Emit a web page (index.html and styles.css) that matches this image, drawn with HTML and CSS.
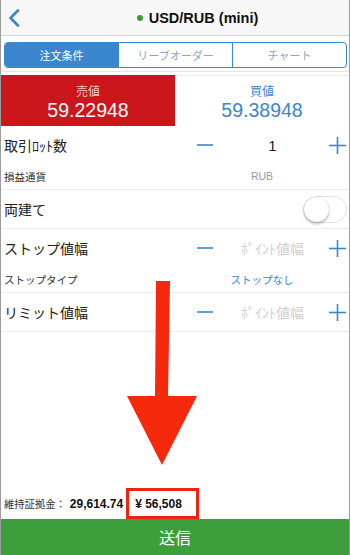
FILE: index.html
```html
<!DOCTYPE html>
<html lang="ja">
<head>
<meta charset="utf-8">
<link rel="stylesheet" href="styles.css">
</head>
<body>
<div class="app">
  <header class="nav">
    <svg class="back" width="12" height="18" viewBox="0 0 12 18"><path d="M10 1.5 L2.5 9 L10 16.5" fill="none" stroke="#3a86cf" stroke-width="2.6" stroke-linecap="round" stroke-linejoin="round"/></svg>
    <div class="title"><span class="dot"></span>USD/RUB (mini)</div>
  </header>
  <div class="segwrap">
    <div class="seg">
      <div class="tab active">注文条件</div>
      <div class="tab">リーブオーダー</div>
      <div class="tab">チャート</div>
    </div>
  </div>
  <div class="prices">
    <div class="price sell"><div class="plabel">売値</div><div class="pval">59.22948</div></div>
    <div class="price buy"><div class="plabel">買値</div><div class="pval">59.38948</div></div>
  </div>
  <div class="group">
    <div class="row main">
      <div class="label">取引ﾛｯﾄ数</div>
      <div class="stepper">
        <svg class="minus" width="16" height="2" viewBox="0 0 16 2"><line x1="0" y1="1" x2="16" y2="1" stroke="#3a86cf" stroke-width="1.6"/></svg>
        <div class="val">1</div>
        <svg class="plus" width="17" height="17" viewBox="0 0 17 17"><line x1="0" y1="8.5" x2="17" y2="8.5" stroke="#3a86cf" stroke-width="1.6"/><line x1="8.5" y1="0" x2="8.5" y2="17" stroke="#3a86cf" stroke-width="1.6"/></svg>
      </div>
    </div>
    <div class="row sub">
      <div class="slabel">損益通貨</div>
      <div class="sval gray">RUB</div>
    </div>
  </div>
  <div class="group">
    <div class="row single">
      <div class="label">両建て</div>
      <div class="toggle"><div class="knob"></div></div>
    </div>
  </div>
  <div class="group">
    <div class="row main">
      <div class="label">ストップ値幅</div>
      <div class="stepper">
        <svg class="minus" width="16" height="2" viewBox="0 0 16 2"><line x1="0" y1="1" x2="16" y2="1" stroke="#3a86cf" stroke-width="1.6"/></svg>
        <div class="val ph">ﾎﾟｲﾝﾄ値幅</div>
        <svg class="plus" width="17" height="17" viewBox="0 0 17 17"><line x1="0" y1="8.5" x2="17" y2="8.5" stroke="#3a86cf" stroke-width="1.6"/><line x1="8.5" y1="0" x2="8.5" y2="17" stroke="#3a86cf" stroke-width="1.6"/></svg>
      </div>
    </div>
    <div class="row sub">
      <div class="slabel">ストップタイプ</div>
      <div class="sval blue">ストップなし</div>
    </div>
  </div>
  <div class="group">
    <div class="row single">
      <div class="label">リミット値幅</div>
      <div class="stepper">
        <svg class="minus" width="16" height="2" viewBox="0 0 16 2"><line x1="0" y1="1" x2="16" y2="1" stroke="#3a86cf" stroke-width="1.6"/></svg>
        <div class="val ph">ﾎﾟｲﾝﾄ値幅</div>
        <svg class="plus" width="17" height="17" viewBox="0 0 17 17"><line x1="0" y1="8.5" x2="17" y2="8.5" stroke="#3a86cf" stroke-width="1.6"/><line x1="8.5" y1="0" x2="8.5" y2="17" stroke="#3a86cf" stroke-width="1.6"/></svg>
      </div>
    </div>
  </div>
  <div class="spacer"></div>
  <div class="margin">
    <span class="mlabel">維持証拠金：</span>
    <span class="mnum">29,614.74</span>
    <span class="yen">¥ 56,508</span>
  </div>
  <div class="submit">送信</div>
  <svg class="arrow" width="350" height="555" viewBox="0 0 350 555">
    <polygon points="156,281 170,281 168,397 155,397" fill="#f7290c"/>
    <polygon points="127,396 197,396 162,465" fill="#f7290c"/>
  </svg>
</div>
</body>
</html>
```
FILE: styles.css
```css
* { box-sizing: border-box; }
html, body { margin: 0; padding: 0; background: #fff; }
body { font-family: "Liberation Sans", "Noto Sans CJK JP", sans-serif; color: #222; }
.app {
  position: relative;
  width: 350px;
  height: 555px;
  border-left: 1px solid #9c9c9c;
  border-right: 1px solid #9c9c9c;
  display: flex;
  flex-direction: column;
  overflow: hidden;
}
.nav {
  height: 36px;
  background: #f7f7f7;
  border-bottom: 1px solid #d4d4d4;
  display: flex;
  align-items: center;
  padding-left: 7px;
  flex-shrink: 0;
}
.back { display: block; }
.title {
  flex: 1;
  text-align: center;
  font-weight: bold;
  font-size: 14.5px;
  padding-left: 26px;
  color: #111;
  display: flex;
  justify-content: center;
  align-items: center;
}
.dot {
  width: 6px; height: 6px; border-radius: 50%;
  background: #3c9a3c;
  margin-right: 6px;
}
.segwrap {
  padding: 6px 2px 3px 3px;
  border-bottom: 1px solid #e4e4e4;
  flex-shrink: 0;
}
.seg {
  display: flex;
  height: 26px;
  border: 1px solid #3a86cf;
  border-radius: 4px;
  overflow: hidden;
}
.tab {
  flex: 1;
  display: flex;
  align-items: center;
  justify-content: center;
  font-family: "Noto Sans CJK JP", sans-serif;
  font-size: 11px;
  color: #8aa6c9;
  border-left: 1px solid #3a86cf;
}
.tab:first-child { border-left: none; }
.tab.active { background: #3a86cf; color: #fff; }
.prices {
  display: flex;
  height: 51px;
  margin-top: 3px;
  flex-shrink: 0;
}
.price {
  flex: 1;
  display: flex;
  flex-direction: column;
  align-items: center;
  justify-content: center;
}
.sell { background: #cb171c; color: #fff; flex: 0 0 174px; }
.buy { color: #3a86cf; border-top: 1px solid #ececec; }
.plabel { font-family: "Noto Sans CJK JP", sans-serif; font-size: 12px; line-height: 16px; margin-top: 2px; }
.sell .plabel { color: #f3c9c9; }
.pval { font-size: 19.5px; line-height: 22px; }
.group { border-bottom: 1px solid #ececec; flex-shrink: 0; }
.row {
  display: flex;
  align-items: center;
  padding-left: 3px;
}
.row.main { height: 36px; margin-top: 1px; }
.row.sub { height: 26px; }
.row.single { height: 38px; }
.label {
  flex: 1;
  font-family: "Noto Sans CJK JP", sans-serif;
  font-size: 14px;
  color: #222;
}
.slabel {
  flex: 1;
  font-family: "Noto Sans CJK JP", sans-serif;
  font-size: 10.5px;
  color: #333;
}
.sval {
  width: 120px;
  margin-right: 27px;
  text-align: center;
  font-size: 10.5px;
  font-family: "Liberation Sans", "Noto Sans CJK JP", sans-serif;
}
.sval.gray { color: #9a9a9a; }
.sval.blue { color: #3a86cf; font-family: "Noto Sans CJK JP", sans-serif; }
.stepper {
  width: 159px;
  display: grid;
  grid-template-columns: 30px 1fr 24px;
  align-items: center;
  justify-items: center;
}
.minus, .plus { display: block; }
.val { font-size: 15px; color: #222; }
.val.ph { color: #cfcfcf; font-family: "Noto Sans CJK JP", sans-serif; font-size: 14px; }
.toggle {
  width: 44px;
  height: 27px;
  border-radius: 14px;
  border: 1px solid #e2e2e2;
  margin-right: 2px;
  position: relative;
}
.knob {
  position: absolute;
  left: 0; top: 0;
  width: 25px; height: 25px;
  border-radius: 50%;
  background: #fff;
  box-shadow: 0 2px 3px rgba(0,0,0,0.28), 0 0 1px rgba(0,0,0,0.2);
}
.spacer { flex: 1; }
.margin {
  height: 31px;
  display: flex;
  align-items: center;
  padding-left: 3px;
  flex-shrink: 0;
}
.mlabel { font-family: "Noto Sans CJK JP", sans-serif; font-size: 10.3px; color: #333; }
.mnum { font-weight: bold; font-size: 12px; margin-left: 4px; color: #111; }
.yen {
  font-weight: bold;
  font-size: 12px;
  color: #111;
  border: 3px solid #ec2414;
  height: 31px;
  display: flex;
  align-items: center;
  padding-left: 6px;
  width: 73px;
  margin-left: 3px;
}
.submit {
  height: 36px;
  background: #3d9f3c;
  color: #fff;
  font-family: "Noto Sans CJK JP", sans-serif;
  font-size: 16px;
  display: flex;
  align-items: center;
  justify-content: center;
  flex-shrink: 0;
}
.arrow {
  position: absolute;
  left: -1px;
  top: 0;
  pointer-events: none;
}
```
